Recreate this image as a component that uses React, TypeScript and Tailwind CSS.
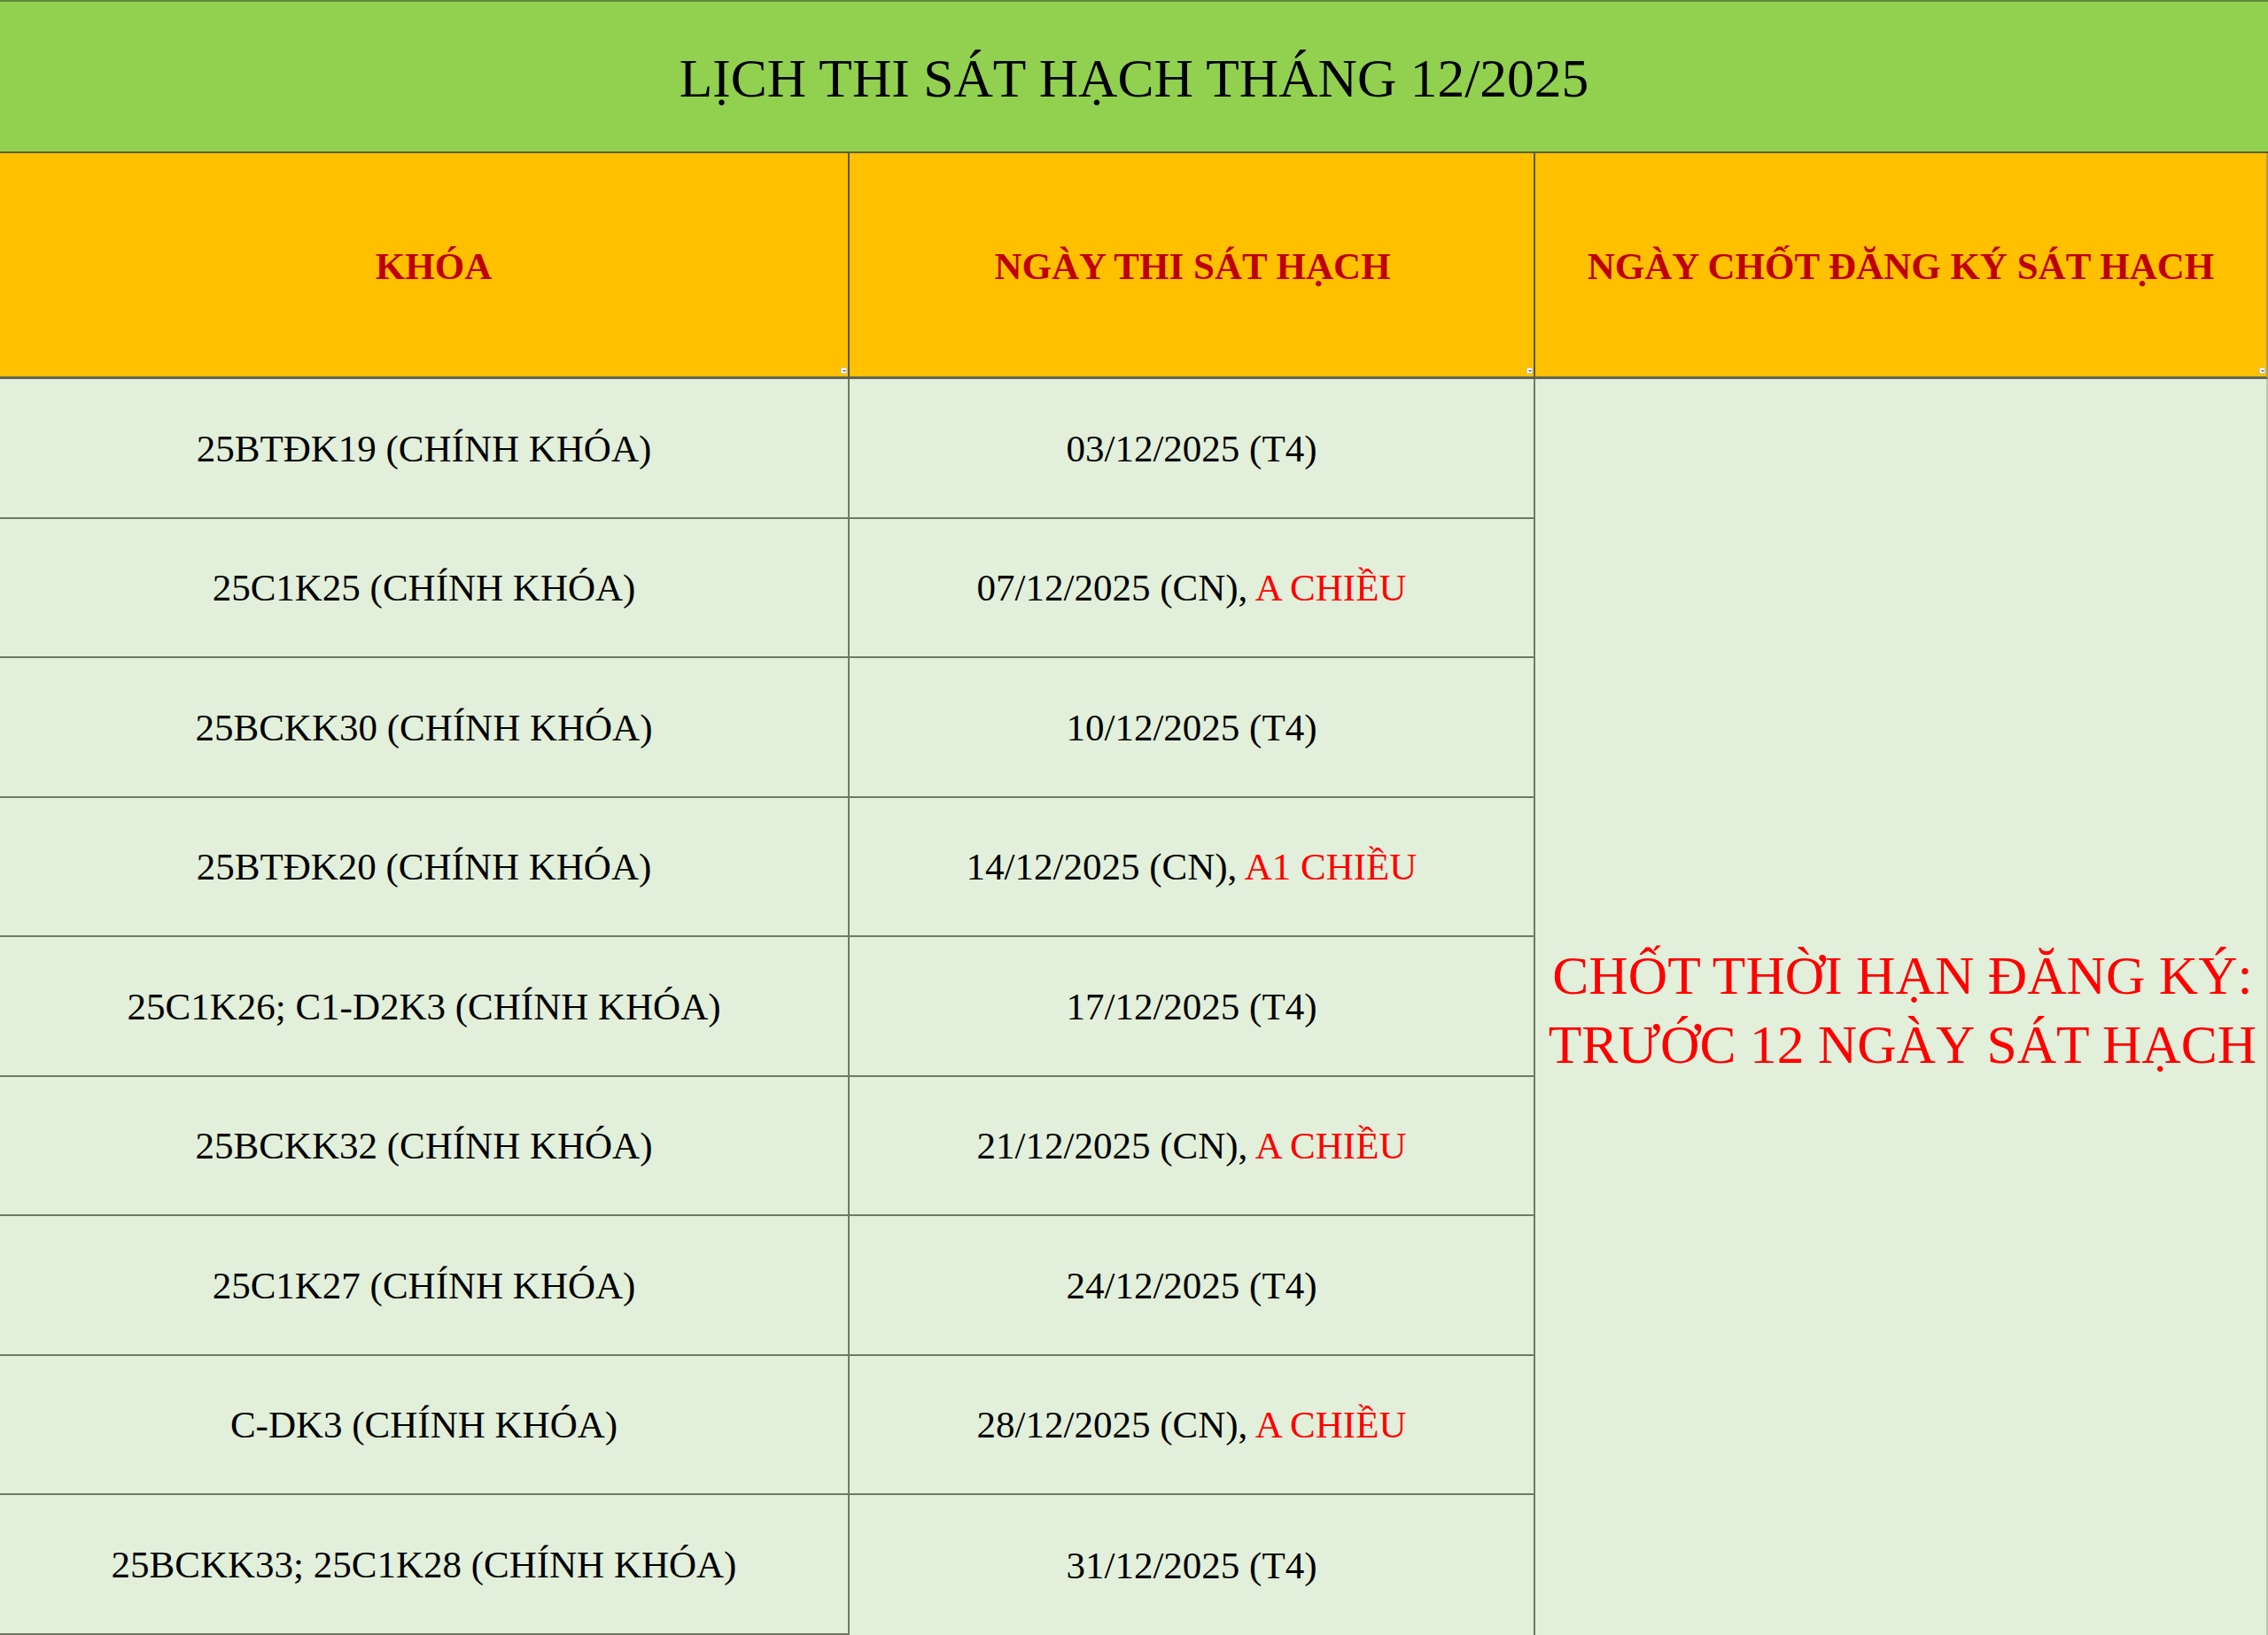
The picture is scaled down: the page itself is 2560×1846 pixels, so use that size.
const rows: { course: string; date: string; note?: string }[] = [
  { course: "25BTĐK19 (CHÍNH KHÓA)", date: "03/12/2025 (T4)" },
  { course: "25C1K25 (CHÍNH KHÓA)", date: "07/12/2025 (CN), ", note: "A CHIỀU" },
  { course: "25BCKK30 (CHÍNH KHÓA)", date: "10/12/2025 (T4)" },
  { course: "25BTĐK20 (CHÍNH KHÓA)", date: "14/12/2025 (CN), ", note: "A1 CHIỀU" },
  { course: "25C1K26; C1-D2K3 (CHÍNH KHÓA)", date: "17/12/2025 (T4)" },
  { course: "25BCKK32 (CHÍNH KHÓA)", date: "21/12/2025 (CN), ", note: "A CHIỀU" },
  { course: "25C1K27 (CHÍNH KHÓA)", date: "24/12/2025 (T4)" },
  { course: "C-DK3 (CHÍNH KHÓA)", date: "28/12/2025 (CN), ", note: "A CHIỀU" },
  { course: "25BCKK33; 25C1K28 (CHÍNH KHÓA)", date: "31/12/2025 (T4)" },
]

const FilterMark = () => (
  <span className="absolute bottom-[3px] right-[1px] flex h-[7px] w-[7px] items-center justify-center border border-[#c8c8c8] bg-white">
    <span className="h-0 w-0 border-x-[2px] border-t-[2px] border-x-transparent border-t-[#555]" />
  </span>
)

export default function App() {
  return (
    <div
      className="flex h-[1846px] w-[2560px] flex-col overflow-hidden bg-[#e2efda] text-black"
      style={{ fontFamily: '"Liberation Serif", "Times New Roman", serif' }}
    >
      <div className="flex h-[173px] shrink-0 items-center justify-center border-t-2 border-b-2 border-t-[#5f8a3a] border-b-[#5f5f2a] bg-[#92d050] pt-[4px]">
        <h1 className="text-[61.5px] leading-none">LỊCH THI SÁT HẠCH THÁNG 12/2025</h1>
      </div>
      <div className="grid flex-1 grid-cols-[959px_774px_1fr] grid-rows-[255px_repeat(9,1fr)]">
        <div className="relative flex items-center justify-center border-r-2 border-b-[3px] border-r-[#5a5a3a] border-b-[#5f6655] bg-[#ffc000] pl-[22px] pt-[4px] text-[43px] font-bold text-[#c00000]">
          KHÓA
          <FilterMark />
        </div>
        <div className="relative flex items-center justify-center border-r-2 border-b-[3px] border-r-[#5a5a3a] border-b-[#5f6655] bg-[#ffc000] pl-[2px] pt-[4px] text-[43px] font-bold text-[#c00000]">
          NGÀY THI SÁT HẠCH
          <FilterMark />
        </div>
        <div className="relative flex items-center justify-center border-r-2 border-b-[3px] border-r-[#b8a040] border-b-[#5f6655] bg-[#ffc000] pt-[4px] text-[43px] font-bold text-[#c00000]">
          NGÀY CHỐT ĐĂNG KÝ SÁT HẠCH
          <FilterMark />
        </div>
        {rows.map((r, i) => (
          <div key={i} className="contents">
            <div className="flex items-center justify-center border-r-2 border-b-2 border-[#6f7a66] pt-[2px] text-[43px]">
              {r.course}
            </div>
            <div
              className={`flex items-center justify-center border-r-2 border-[#6f7a66] pt-[2px] text-[43px] ${i < rows.length - 1 ? "border-b-2" : "border-b-0"}`}
            >
              <span>
                {r.date}
                {r.note && <span className="text-[#ff0000]">{r.note}</span>}
              </span>
            </div>
            {i === 0 && (
              <div className="row-span-9 flex items-center justify-center border-r-2 border-[#b9c6b0] pl-[4px] pt-[6px] text-center text-[61.5px] leading-[78px] text-[#ff0000]">
                <p>
                  CHỐT THỜI HẠN ĐĂNG KÝ:
                  <br />
                  TRƯỚC 12 NGÀY SÁT HẠCH
                </p>
              </div>
            )}
          </div>
        ))}
      </div>
    </div>
  )
}
